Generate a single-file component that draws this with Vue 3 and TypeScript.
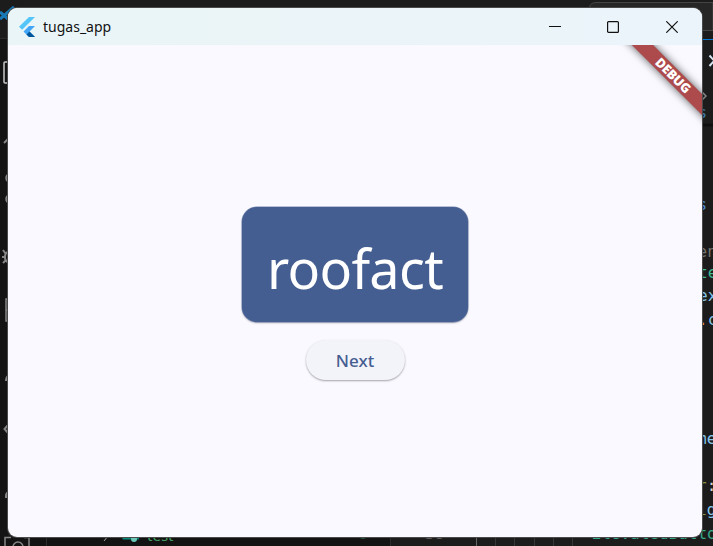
<script setup lang="ts">
interface CodeBit {
  x: number
  y: number
  text: string
  fill: string
}

const title = 'tugas_app'
const word = 'roofact'

const codeBits: CodeBit[] = [
  { x: 697.5, y: 118, text: 's', fill: '#3f78a8' },
  { x: 697.5, y: 210, text: 's', fill: '#4a86d0' },
  { x: 697.5, y: 257, text: 'en', fill: '#77736c' },
  { x: 698, y: 278, text: 'te', fill: '#3fb893' },
  { x: 698, y: 301, text: 'ex', fill: '#86c5ea' },
  { x: 698, y: 325, text: '.', fill: '#d79a55' },
  { x: 707.7, y: 325, text: 'c', fill: '#86c5ea' },
  { x: 697, y: 444, text: 'me', fill: '#86c5ea' },
  { x: 697, y: 491, text: 'r', fill: '#86923c' },
  { x: 706.7, y: 491, text: ':', fill: '#d4d4d4' },
  { x: 697, y: 515, text: 'i', fill: '#86923c' },
  { x: 706.7, y: 515, text: 'g', fill: '#86c5ea' },
  { x: 591.5, y: 539, text: 'ElevatedButton', fill: '#35a88a' },
]

const guides: number[] = [476, 495, 514, 534, 553, 572]
</script>

<template>
  <main class="desktop">
    <svg class="editor" width="713" height="546" viewBox="0 0 713 546">
      <rect width="713" height="546" fill="#1c1c1c" />
      <rect y="38" width="8" height="508" fill="#141414" />
      <rect y="538" width="390" height="8" fill="#131313" />
      <path d="M0 38.500H8M46.500 537V546M390.500 537V546" stroke="#2b2b2b" />
      <path d="M0 12L8 19M0 19L14 7" stroke="#1679b8" stroke-width="3" fill="none" />
      <path d="M589.500 8Q590 2.500 596 2.500H713V30.500H700" fill="#262626" stroke="#454545" />
      <path d="M702 39.500H713" stroke="#0878d4" />
      <path d="M702 125H713" stroke="#101010" stroke-width="3" />
      <path d="M709.500 55.500L719 66M709.500 66L719 55.500" stroke="#d5e5f2" stroke-width="2" />
      <path d="M702 92L706 96L702 100" stroke="#858585" stroke-width="1.500" fill="none" />
      <g fill="none" stroke="#868686" stroke-width="1.500">
        <path d="M9 62H5Q4 62 4 63V82Q4 83 5 83H9" stroke="#c8c8c8" />
        <path d="M4 143L9 138" stroke-width="2" />
        <path d="M9 174.500Q6.300 175 6.300 178Q6.300 181 9 181.500M9 195.500Q6.300 196 6.300 199Q6.300 202 9 202.500" stroke-width="2" />
        <path d="M3 250L5.500 253.500M2 257H5M3 263L5.500 260.500M9 252Q5 252 5 257Q5 262 9 262" stroke-width="2" />
        <path d="M9 299H6V321H9M6 310H9" />
        <path d="M6 381Q6 377 9 375M9 424L4.500 429L9 434M6 498V496Q6 493 9 492" stroke-width="2" />
        <path d="M5 546V537.500H11M24 537.500H29V546" />
        <circle cx="18" cy="547" r="5" />
      </g>
      <path d="M104 541L108 536" stroke="#a0a0a0" />
      <path d="M121 536H139V539.500H123Z" fill="#078c7c" />
      <circle cx="134" cy="539" r="3" fill="#6dc8b8" />
      <circle cx="363" cy="535.500" r="3.500" fill="#28543a" />
      <text x="147" y="541" font-size="15" class="sans" fill="#419b61">test</text>
      <text x="425" y="539" font-size="16" class="mono" fill="#626262">38</text>
      <path v-for="(x, i) in guides" :key="x" :d="`M${x + 0.5} 537V546`" :stroke="i ? '#373737' : '#666666'" />
      <text v-for="(bit, i) in codeBits" :key="i" :x="bit.x" :y="bit.y" font-size="16" class="mono" :fill="bit.fill">{{ bit.text }}</text>
    </svg>

    <section class="window">
      <header class="titlebar">
        <svg class="logo" width="16" height="20" viewBox="0 0 16 20">
          <path d="M10 0H16L3.200 12.700L0 9.700Z" fill="#54c5f8" />
          <path d="M10 9H16L10.500 14.500L16 20H10L4.500 14.500Z" fill="#42a5f5" />
          <path d="M7.500 17.500L10.500 14.500L16 20H10Z" fill="#01579b" />
        </svg>
        <h1 class="title">{{ title }}</h1>
        <div class="controls">
          <svg width="12" height="12"><path d="M0 5.500H12" /></svg>
          <svg width="12" height="12"><rect x=".6" y=".6" width="10.800" height="10.800" rx="1" /></svg>
          <svg width="12" height="12"><path d="M.3 .3L11.700 11.700M11.700 .3L.3 11.700" /></svg>
        </div>
      </header>
      <div class="body">
        <div class="card"><span class="word">{{ word }}</span></div>
        <button class="next" type="button"><span>Next</span></button>
        <div class="banner"><span>DEBUG</span></div>
      </div>
    </section>
  </main>
</template>

<style>
body {
  margin: 0;
  overflow: hidden;
}
</style>

<style scoped>
.desktop {
  position: relative;
  box-sizing: border-box;
  width: 713px;
  height: 546px;
  padding: 8px 11px 9px 8px;
  overflow: hidden;
  font-family: "Noto Sans", "Open Sans", sans-serif;
}
.editor {
  position: absolute;
  inset: 0;
}
.mono {
  font-family: "DejaVu Sans Mono", monospace;
}
.sans {
  font-family: "Noto Sans", sans-serif;
}
.window {
  position: relative;
  display: flex;
  flex-direction: column;
  height: 529px;
  border-radius: 9px;
  overflow: hidden;
  background: #faf9ff;
  box-shadow: 0 0 0 1px #4a4a4a;
}
.titlebar {
  display: flex;
  align-items: center;
  box-sizing: border-box;
  height: 37px;
  padding: 0 24px 0 11px;
  background: linear-gradient(90deg, #eaf5f7, #ebf4fa);
}
.logo {
  display: block;
  margin-right: 8px;
}
.title {
  flex: 1;
  margin: 0;
  font-size: 14px;
  line-height: 20px;
  font-weight: 400;
  color: #111;
}
.controls {
  display: flex;
  gap: 47px;
}
.controls svg {
  display: block;
  fill: none;
  stroke: #111;
  stroke-width: 1.2;
}
.controls svg + svg {
  margin-left: -0.300px;
}
.body {
  position: relative;
  display: flex;
  flex: 1;
  flex-direction: column;
  align-items: center;
  gap: 18px;
  padding-top: 162px;
  overflow: hidden;
}
.card {
  display: flex;
  align-items: center;
  justify-content: center;
  width: 226px;
  height: 115px;
  border-radius: 15px;
  background: #455e91;
  box-shadow: 0 0 0 0.500px #7c8db3, 0 1px 2px rgba(0, 0, 0, 0.35);
}
.word {
  color: #fff;
  font-size: 54px;
  line-height: 76px;
  letter-spacing: -0.700px;
  padding-top: 6px;
}
.next {
  display: flex;
  align-items: center;
  justify-content: center;
  width: 99px;
  height: 40px;
  margin: 0;
  padding: 0;
  border: 0;
  border-radius: 20px;
  background: #f3f3fa;
  box-shadow: 0 1px 2px rgba(0, 0, 0, 0.35);
  color: #455e91;
  font-family: inherit;
  font-size: 17px;
  font-weight: 500;
}
.banner {
  position: absolute;
  top: 22.500px;
  right: -36px;
  width: 130px;
  height: 15px;
  transform: rotate(45deg);
  background: #ac4a4c;
  box-shadow: 0 0 8px rgba(0, 0, 0, 0.65);
  color: #fff;
  font-size: 13px;
  line-height: 15px;
  font-weight: 900;
  letter-spacing: -0.200px;
  text-align: center;
}
</style>
